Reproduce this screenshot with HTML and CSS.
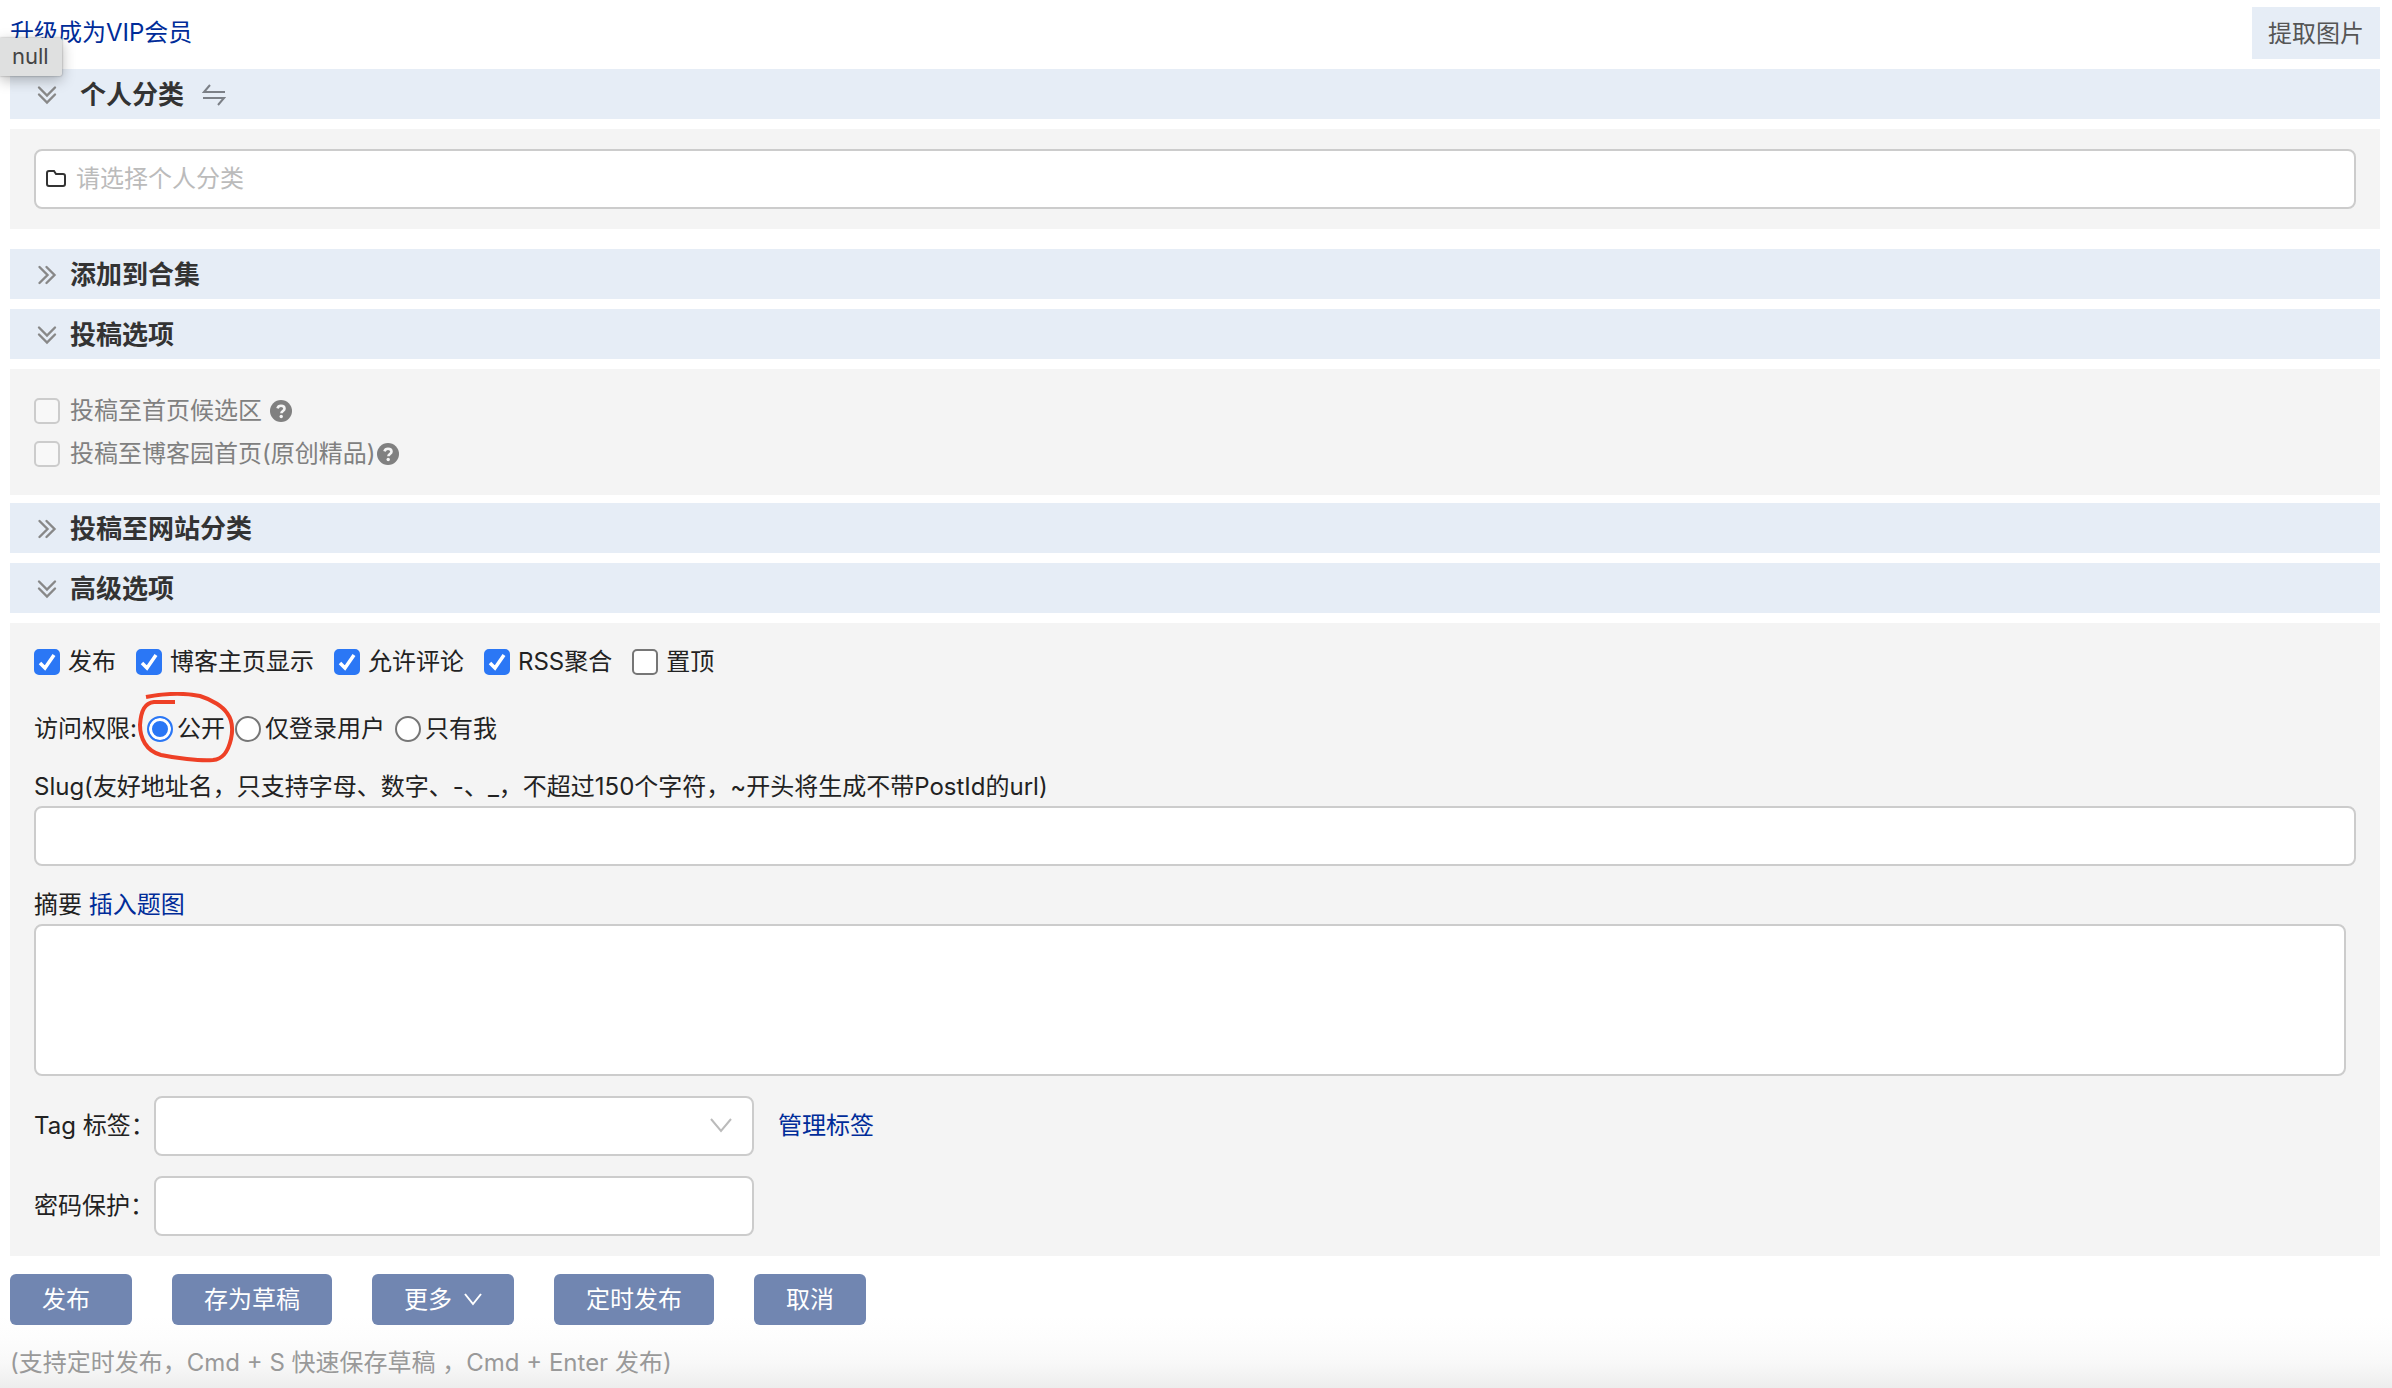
FILE: index.html
```html
<!DOCTYPE html>
<html lang="zh-CN">
<head>
<meta charset="utf-8">
<title>编辑随笔</title>
<link rel="stylesheet" href="styles.css">
</head>
<body>
<svg class="defs" aria-hidden="true">
  <symbol id="down" viewBox="0 0 20 20"><path d="M2 2.500l8 8 8-8M2 9.500l8 8 8-8" fill="none" stroke="currentColor" stroke-width="2.400" stroke-linecap="round"/></symbol>
  <symbol id="right" viewBox="0 0 20 20"><path d="M2.500 2l8 8-8 8M9.500 2l8 8-8 8" fill="none" stroke="currentColor" stroke-width="2.400" stroke-linecap="round"/></symbol>
  <symbol id="help" viewBox="0 0 24 24"><circle cx="12" cy="12" r="11" fill="currentColor"/><path d="M8.500 9.300C9 7.500 10.300 6.800 12 6.800c2 0 3.500 1.100 3.500 2.900 0 2.300-3.100 2.400-3.100 4.600" fill="none" stroke="#f4f4f4" stroke-width="2.600"/><circle cx="12.200" cy="17.500" r="1.700" fill="#f4f4f4"/></symbol>
</svg>
<header class="topbar">
  <a class="link" href="#">升级成为VIP会员</a>
  <button class="extract" type="button">提取图片</button>
  <div class="tooltip" role="tooltip">null</div>
</header>
<form class="editor">
  <section>
    <h2 class="bar"><svg class="fold"><use href="#down"/></svg><span class="spaced">个人分类</span>
      <svg class="swap" viewBox="0 0 24 24"><path d="M8 2L2 9h21M1 15h21l-6 7" fill="none" stroke="currentColor" stroke-width="2"/></svg></h2>
    <div class="panel panel-category">
      <div class="picker">
        <svg class="folder" viewBox="0 0 20 18"><path d="M1 3a2 2 0 0 1 2-2h5l2 3h7a2 2 0 0 1 2 2v8a2 2 0 0 1-2 2H3a2 2 0 0 1-2-2z" fill="none" stroke="currentColor" stroke-width="2"/></svg>
        <input class="picker-input" type="text" aria-label="个人分类" placeholder="请选择个人分类">
      </div>
    </div>
  </section>
  <section>
    <h2 class="bar"><svg class="fold"><use href="#right"/></svg>添加到合集</h2>
  </section>
  <section class="submission">
    <h2 class="bar"><svg class="fold"><use href="#down"/></svg>投稿选项</h2>
    <div class="panel panel-submit">
      <div class="submit-row"><label class="choice choice-wide"><input type="checkbox" disabled>投稿至首页候选区</label><svg class="help help-apart"><use href="#help"/></svg></div>
      <div class="submit-row"><label class="choice choice-wide"><input type="checkbox" disabled>投稿至博客园首页(原创精品)</label><svg class="help"><use href="#help"/></svg></div>
    </div>
  </section>
  <section>
    <h2 class="bar"><svg class="fold"><use href="#right"/></svg>投稿至网站分类</h2>
  </section>
  <section>
    <h2 class="bar"><svg class="fold"><use href="#down"/></svg>高级选项</h2>
    <div class="panel panel-advanced">
      <div class="checks">
        <label class="choice"><input type="checkbox" checked>发布</label>
        <label class="choice"><input type="checkbox" checked>博客主页显示</label>
        <label class="choice"><input type="checkbox" checked>允许评论</label>
        <label class="choice"><input type="checkbox" checked>RSS聚合</label>
        <label class="choice"><input type="checkbox">置顶</label>
      </div>
      <div class="access" role="radiogroup" aria-labelledby="access-name">
        <span id="access-name">访问权限:</span>
        <label class="choice choice-tight marked"><input type="radio" name="access" checked>公开
          <svg class="mark" viewBox="0 0 100 72" aria-hidden="true"><path d="M9 5C30 1 48 1 63 4C76 8 86 15 90 21C96 29 96 38 94 47C91 60 86 67 76 68C62 69 38 66 24 63C9 59 3 46 3 33C4 18 8 11 17 10H38" fill="none" stroke="#ee4026" stroke-width="4"/></svg></label>
        <label class="choice choice-tight"><input type="radio" name="access">仅登录用户</label>
        <label class="choice choice-tight"><input type="radio" name="access">只有我</label>
      </div>
      <label class="caption" for="slug">Slug(友好地址名，只支持字母、数字、-、_，不超过150个字符，~开头将生成不带PostId的url)</label>
      <input class="field" id="slug" type="text">
      <div class="caption"><label for="summary">摘要</label> <a class="link" href="#">插入题图</a></div>
      <textarea class="field summary" id="summary"></textarea>
      <div class="row">
        <label class="row-name" for="tags">Tag 标签：</label>
        <div class="select-wrap">
          <select class="field" id="tags"><option></option></select>
          <svg class="arrow" viewBox="0 0 22 16"><path d="M1 1l10 12L21 1" fill="none" stroke="currentColor" stroke-width="2"/></svg>
        </div>
        <a class="link" href="#">管理标签</a>
      </div>
      <div class="row">
        <label class="row-name" for="password">密码保护：</label>
        <input class="field password" id="password" type="password">
      </div>
    </div>
  </section>
</form>
<footer class="footer">
  <div class="actions">
    <button class="btn btn-publish" type="button">发布</button>
    <button class="btn" type="button">存为草稿</button>
    <button class="btn" type="button">更多<svg class="caret" viewBox="0 0 18 14"><path d="M1 1l8 10 8-10" fill="none" stroke="currentColor" stroke-width="2"/></svg></button>
    <button class="btn" type="button">定时发布</button>
    <button class="btn" type="button">取消</button>
  </div>
  <p class="hint">(支持定时发布，Cmd + S 快速保存草稿 ，Cmd + Enter 发布)</p>
</footer>
</body>
</html>
```

FILE: styles.css
```css
* { box-sizing: border-box; }
html { min-height: 100%; background: #fff; }
body {
  margin: 0;
  min-height: 100vh;
  display: flex;
  flex-direction: column;
  color: #222;
  font: 24px/36px Inter, "Noto Sans CJK SC", sans-serif;
}
input, textarea, select, button { margin: 0; font: inherit; color: inherit; }
.defs { position: absolute; width: 0; height: 0; }
.link { color: #002c99; text-decoration: none; }

.topbar {
  position: relative;
  display: flex;
  justify-content: space-between;
  align-items: center;
  padding: 7px 12px 10px 10px;
}
.extract {
  height: 52px;
  padding: 2px 16px 0;
  border: 0;
  background: #e6edf6;
  color: #555;
}
.tooltip {
  position: absolute;
  left: 0;
  top: 38px;
  width: 62px;
  height: 38px;
  padding-left: 12px;
  border-radius: 0 2px 2px 0;
  background: #dfe0e0;
  color: #444;
  font-size: 22px;
  box-shadow: 0 4px 14px rgba(0, 0, 0, .28), 0 0 2px rgba(0, 0, 0, .4);
}

.editor { display: flex; flex-direction: column; gap: 10px; padding: 0 12px 0 10px; }
.bar {
  display: flex;
  align-items: center;
  height: 50px;
  margin: 0;
  padding: 2px 0 0 27px;
  gap: 13px;
  background: #e6edf6;
  color: #333;
  font-size: 26px;
  font-weight: 700;
}
.fold { width: 20px; height: 20px; color: #888; }
.spaced { margin: 0 5px 0 10px; }
.swap { width: 24px; height: 24px; color: #7c8087; }
.panel { margin-top: 10px; padding: 20px 24px; background: #f4f4f4; }

.field, .picker {
  display: block;
  width: 100%;
  height: 60px;
  border: 2px solid #ccc;
  border-radius: 8px;
  background: #fff;
}
.panel-category { margin-bottom: 10px; }
.picker { display: flex; align-items: center; gap: 10px; padding-left: 10px; }
.folder { width: 20px; height: 18px; color: #333; }
.picker-input { flex: 1; border: 0; padding: 0; background: none; outline: 0; }
.picker-input::placeholder { color: #bbb; opacity: 1; }

.choice { display: inline-flex; align-items: center; gap: 8px; }
.choice-wide { gap: 10px; }
.choice-tight { gap: 4px; }
.choice input {
  appearance: none;
  flex: none;
  width: 26px;
  height: 26px;
  border: 2px solid #767676;
  background: #fff;
}
.choice input[type="checkbox"] { border-radius: 5px; }
.choice input[type="checkbox"]:disabled { border-color: #ccc; background: #f8f8f8; }
.choice input[type="checkbox"]:checked {
  border-color: #2b77f5;
  background: #2b77f5 url('data:image/svg+xml,<svg xmlns="http://www.w3.org/2000/svg" viewBox="0 0 22 22"><path d="M4 12l5 5 9-13" fill="none" stroke="white" stroke-width="3.500"/></svg>') center / 22px 22px;
}
.choice input[type="radio"] { border-radius: 50%; }
.choice input[type="radio"]:checked {
  border-color: #2b77f5;
  background: #2b77f5;
  box-shadow: inset 0 0 0 3px #fff;
}

.submission { margin-bottom: -2px; }
.panel-submit { color: #808080; }
.submit-row { display: flex; align-items: center; height: 43px; }
.help { width: 24px; height: 24px; }
.help-apart { margin-left: 7px; }

.checks { display: flex; align-items: center; gap: 20px; height: 38px; margin-bottom: 29px; }
.access { display: flex; align-items: center; gap: 10px; height: 38px; }
.marked { position: relative; }
.mark { position: absolute; left: -10px; top: -19px; width: 100px; height: 72px; pointer-events: none; }
.caption { display: block; height: 58px; padding-top: 21px; }
.summary { width: calc(100% - 10px); height: 152px; padding: 8px; resize: none; }
.row { display: flex; align-items: center; margin-top: 20px; }
.row-name { flex: none; width: 120px; white-space: nowrap; }
.select-wrap { position: relative; width: 600px; margin-right: 24px; }
.select-wrap .field { appearance: none; }
.arrow { position: absolute; right: 22px; top: 22px; width: 22px; height: 16px; color: #bbb; pointer-events: none; }
.password { width: 600px; padding: 0 12px; }

.footer {
  flex: 1;
  padding: 18px 10px 0;
  background: linear-gradient(to top, #ededed, #f8f8f8 24px, #fdfdfd 50px, #fff 72px);
}
.actions { display: flex; flex-wrap: wrap; gap: 40px; }
.btn {
  display: flex;
  align-items: center;
  height: 51px;
  padding: 0 32px;
  border: 0;
  border-radius: 6px;
  background: #7186b1;
  color: #fff;
}
.btn-publish { padding-right: 42px; }
.caret { width: 18px; height: 14px; margin-left: 12px; }
.hint { margin: 20px 0 0; color: #999; white-space: nowrap; }
```
